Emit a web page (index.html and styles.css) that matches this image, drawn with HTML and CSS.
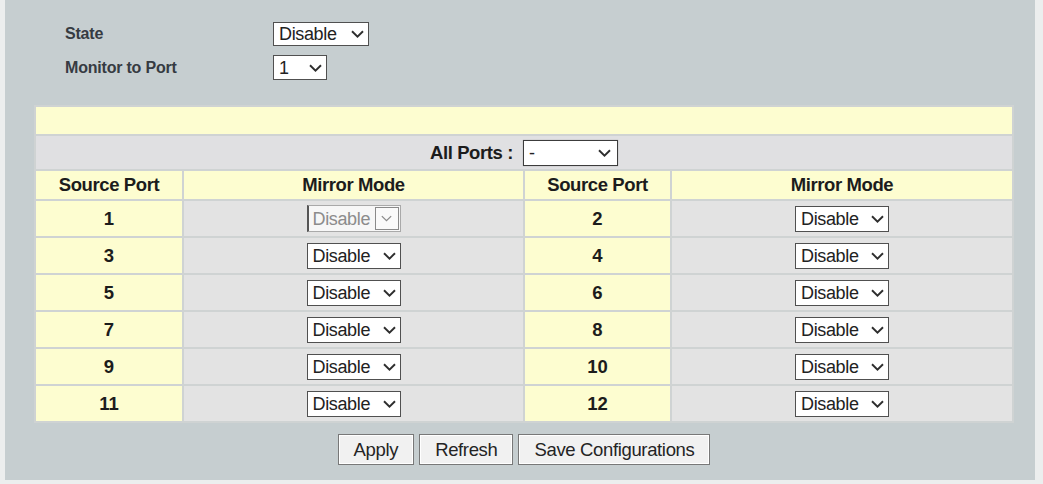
FILE: index.html
```html
<!DOCTYPE html>
<html>
<head>
<meta charset="utf-8">
<link rel="stylesheet" href="styles.css">
</head>
<body>
<div class="page">
  <div class="settings">
    <div class="label">State</div>
    <div class="field"><span class="sel sel-state"><span class="val">Disable</span><svg class="chev" viewBox="0 0 13 8"><path d="M1 1.2 L6.5 6.6 L12 1.2"/></svg></span></div>
    <div class="label">Monitor to Port</div>
    <div class="field"><span class="sel sel-port"><span class="val">1</span><svg class="chev" viewBox="0 0 13 8"><path d="M1 1.2 L6.5 6.6 L12 1.2"/></svg></span></div>
  </div>

  <table class="mirror">
    <colgroup>
      <col class="c-port">
      <col class="c-mode">
      <col class="c-port2">
      <col class="c-mode2">
    </colgroup>
    <tr class="blank"><td colspan="4"></td></tr>
    <tr class="all"><td colspan="4"><span class="all-label">All Ports :</span><span class="sel sel-all"><span class="val">-</span><svg class="chev" viewBox="0 0 13 8"><path d="M1 1.2 L6.5 6.6 L12 1.2"/></svg></span></td></tr>
    <tr class="head"><th>Source Port</th><th>Mirror Mode</th><th>Source Port</th><th>Mirror Mode</th></tr>
    <tr class="row">
      <td class="port">1</td>
      <td class="mode"><span class="sel sel-off"><span class="val">Disable</span><span class="arrowbox"><svg class="chev" viewBox="0 0 13 8"><path d="M1 1.2 L6.5 6.6 L12 1.2"/></svg></span></span></td>
      <td class="port">2</td>
      <td class="mode"><span class="sel sel-row"><span class="val">Disable</span><svg class="chev" viewBox="0 0 13 8"><path d="M1 1.2 L6.5 6.6 L12 1.2"/></svg></span></td>
    </tr>
    <tr class="row">
      <td class="port">3</td>
      <td class="mode"><span class="sel sel-row"><span class="val">Disable</span><svg class="chev" viewBox="0 0 13 8"><path d="M1 1.2 L6.5 6.6 L12 1.2"/></svg></span></td>
      <td class="port">4</td>
      <td class="mode"><span class="sel sel-row"><span class="val">Disable</span><svg class="chev" viewBox="0 0 13 8"><path d="M1 1.2 L6.5 6.6 L12 1.2"/></svg></span></td>
    </tr>
    <tr class="row">
      <td class="port">5</td>
      <td class="mode"><span class="sel sel-row"><span class="val">Disable</span><svg class="chev" viewBox="0 0 13 8"><path d="M1 1.2 L6.5 6.6 L12 1.2"/></svg></span></td>
      <td class="port">6</td>
      <td class="mode"><span class="sel sel-row"><span class="val">Disable</span><svg class="chev" viewBox="0 0 13 8"><path d="M1 1.2 L6.5 6.6 L12 1.2"/></svg></span></td>
    </tr>
    <tr class="row">
      <td class="port">7</td>
      <td class="mode"><span class="sel sel-row"><span class="val">Disable</span><svg class="chev" viewBox="0 0 13 8"><path d="M1 1.2 L6.5 6.6 L12 1.2"/></svg></span></td>
      <td class="port">8</td>
      <td class="mode"><span class="sel sel-row"><span class="val">Disable</span><svg class="chev" viewBox="0 0 13 8"><path d="M1 1.2 L6.5 6.6 L12 1.2"/></svg></span></td>
    </tr>
    <tr class="row">
      <td class="port">9</td>
      <td class="mode"><span class="sel sel-row"><span class="val">Disable</span><svg class="chev" viewBox="0 0 13 8"><path d="M1 1.2 L6.5 6.6 L12 1.2"/></svg></span></td>
      <td class="port">10</td>
      <td class="mode"><span class="sel sel-row"><span class="val">Disable</span><svg class="chev" viewBox="0 0 13 8"><path d="M1 1.2 L6.5 6.6 L12 1.2"/></svg></span></td>
    </tr>
    <tr class="row">
      <td class="port">11</td>
      <td class="mode"><span class="sel sel-row"><span class="val">Disable</span><svg class="chev" viewBox="0 0 13 8"><path d="M1 1.2 L6.5 6.6 L12 1.2"/></svg></span></td>
      <td class="port">12</td>
      <td class="mode"><span class="sel sel-row"><span class="val">Disable</span><svg class="chev" viewBox="0 0 13 8"><path d="M1 1.2 L6.5 6.6 L12 1.2"/></svg></span></td>
    </tr>
  </table>

  <div class="actions">
    <button class="btn">Apply</button>
    <button class="btn">Refresh</button>
    <button class="btn">Save Configurations</button>
  </div>
</div>
</body>
</html>
```

FILE: styles.css
```css
html, body {
  margin: 0;
  padding: 0;
}
body {
  background: #eceeee;
  font-family: "Liberation Sans", Arial, sans-serif;
  color: #1c1c1c;
}
.page {
  margin-left: 5px;
  width: 1030px;
  height: 480px;
  background: #c6ced0;
  padding-top: 22px;
  box-sizing: border-box;
}
.settings {
  display: grid;
  grid-template-columns: 208px auto;
  grid-template-rows: 24px 25px;
  row-gap: 9px;
  margin-left: 60px;
  align-items: center;
}
.label {
  font-size: 16px;
  font-weight: bold;
  letter-spacing: -0.2px;
  color: #363b42;
}
.field {
  display: flex;
  align-items: center;
}

/* custom select look */
.sel {
  display: inline-flex;
  align-items: center;
  justify-content: space-between;
  box-sizing: border-box;
  background: #fff;
  border: 1px solid #505050;
  font-size: 18px;
  letter-spacing: -0.35px;
  color: #222;
  padding: 0 4px 0 5px;
  line-height: 1;
  vertical-align: middle;
}
.chev {
  width: 13px;
  height: 8px;
  flex: none;
}
.chev path {
  fill: none;
  stroke: #2e2e2e;
  stroke-width: 1.9;
  stroke-linejoin: miter;
}
.sel-state {
  width: 96px;
  height: 24px;
}
.sel-port {
  width: 54px;
  height: 25px;
}
.sel-all {
  width: 95px;
  height: 26px;
  border-color: #3c3c3c;
  box-shadow: 0 0 1px rgba(0,0,0,0.3);
  margin-left: 10px;
}
.sel-all .chev {
  margin-right: 2px;
}
.sel-row {
  width: 94px;
  height: 26px;
}
.sel-off {
  width: 94px;
  height: 27px;
  border: 1px solid #a9a9a9;
  border-left: 2px solid #555;
  padding: 1px 1px 1px 4px;
  color: #8c8c8c;
  background: #f7f7f7;
}
.arrowbox {
  display: inline-flex;
  align-items: center;
  justify-content: center;
  height: 100%;
  width: 24px;
  box-sizing: border-box;
  border: 1px solid #8a8a8a;
  background: #fafafa;
}
.arrowbox .chev {
  width: 11px;
  height: 7px;
}
.arrowbox .chev path {
  stroke: #8a8a8a;
  stroke-width: 1.5;
}

/* table */
.mirror {
  margin-top: 25px;
  margin-left: 29px;
  width: 980px;
  border-collapse: separate;
  border-spacing: 2px;
  table-layout: fixed;
  background: #cfd3d3;
}
.c-port { width: 146px; }
.c-mode { width: 339px; }
.c-port2 { width: 145px; }
.c-mode2 { width: 340px; }
.mirror td, .mirror th {
  padding: 0;
  text-align: center;
  vertical-align: middle;
}
.blank td {
  height: 27px;
  background: #fdfdd0;
}
.all td {
  height: 33px;
  background: #e0e0e2;
}
.all-label {
  font-size: 18.5px;
  font-weight: bold;
  letter-spacing: -0.4px;
  color: #1c1c1c;
  vertical-align: middle;
}
.head th {
  height: 28px;
  background: #fdfdd0;
  font-size: 18.5px;
  font-weight: bold;
  letter-spacing: -0.4px;
  color: #1c1c1c;
}
.row td {
  height: 35px;
}
.row .port {
  background: #fdfdd0;
  font-size: 18.5px;
  font-weight: bold;
  color: #1c1c1c;
}
.row .mode {
  background: #e3e3e3;
}

/* buttons */
.actions {
  margin-top: 11px;
  margin-left: 29px;
  width: 980px;
  display: flex;
  justify-content: center;
  gap: 5px;
}
.btn {
  height: 31px;
  padding: 0 15px;
  font-family: "Liberation Sans", Arial, sans-serif;
  font-size: 18.5px;
  letter-spacing: -0.35px;
  color: #242424;
  background: #f1f1f1;
  border: 1px solid #787878;
  box-shadow: inset 0 0 0 1px #ffffff;
  border-radius: 0;
}
```
